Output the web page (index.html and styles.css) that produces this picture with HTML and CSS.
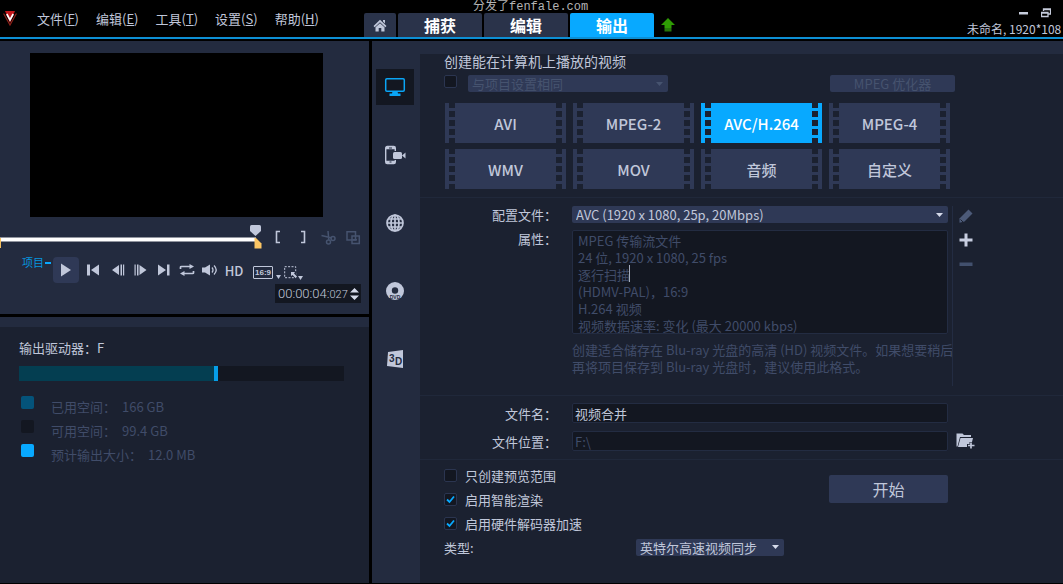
FILE: index.html
```html
<!DOCTYPE html>
<html lang="zh-CN">
<head>
<meta charset="utf-8">
<title>输出</title>
<link rel="stylesheet" href="styles.css">
</head>
<body>
<header class="topbar">
  <nav class="menu">
    <svg class="logo" width="14" height="15" viewBox="0 0 14 15"><path d="M2 0h10L7 12z" fill="#c3171b"/><path d="M.6 2.500 7 14l6.400-11.500" fill="none" stroke="#8d2018" stroke-width="1.200"/><path d="M3.800 3 7 9l3.200-6" fill="none" stroke="#fff" stroke-width="1.700"/></svg>
    <button>文件(<u>F</u>)</button>
    <button>编辑(<u>E</u>)</button>
    <button>工具(<u>T</u>)</button>
    <button>设置(<u>S</u>)</button>
    <button>帮助(<u>H</u>)</button>
  </nav>
  <div class="tabs">
    <button class="tab home" aria-label="主页"><svg width="14" height="13" viewBox="0 0 14 13"><path d="M7 .8 13.500 7l-1.200 1.300L7 3.300 1.700 8.300.5 7zM10 1h2v3.500l-2-2z" fill="#c0c7da"/><path d="M7 4.200 11.500 8.300V12.500H8.300V9H5.700v3.500H2.500V8.300z" fill="#c0c7da"/></svg></button>
    <button class="tab">捕获</button>
    <button class="tab">编辑</button>
    <button class="tab active">输出</button>
    <button class="update" aria-label="更新"><svg width="14" height="14" viewBox="0 0 14 14"><path d="M7 0 14 7H10.500V10H3.500V7H0z" fill="#2f9b04"/><path d="M3.500 10h7v3.500h-7z" fill="#26760a"/></svg></button>
  </div>
  <div class="status">
    <div class="winbtns">
      <button aria-label="最小化"><svg width="10" height="10" viewBox="0 0 10 10"><path d="M0 4h9v2.500H0z" fill="#c6ccdc"/></svg></button>
      <button aria-label="还原"><svg width="10" height="10" viewBox="0 0 10 10"><path d="M2.500 3V1H9.500V6H7.500M2.500 1.500h7M.5 4.500h6.500v4H.5zM.5 5h6.500" fill="none" stroke="#c6ccdc" stroke-width="1.300"/></svg></button>
      <button aria-label="关闭"><svg width="10" height="10" viewBox="0 0 10 10"><path d="m1 1 8 8M9 1 1 9" stroke="#c6ccdc" stroke-width="2"/></svg></button>
    </div>
    <div class="project">未命名, 1920*108</div>
  </div>
  <div class="watermark">分发了fenfale.com</div>
</header>

<main class="workspace">
  <div class="left">
    <section class="player">
      <div class="video"></div>
      <div class="scrub">
        <svg width="262" height="24" viewBox="0 0 262 24"><path d="M0 14.500h256" stroke="#fff" stroke-width="4"/><path d="M0 13h1v10H0z" fill="#f5c060"/><path d="M250 1.500q0-1.500 1.500-1.500h8q1.500 0 1.500 1.500V6l-5.500 5L250 6z" fill="#c0c7da"/><path d="M254.500 13h1.500l5.500 5.500V23.500h-7z" fill="#fcc664"/></svg>
        <button aria-label="开始标记"><svg width="24" height="14" viewBox="0 0 24 14"><path d="M14 1.500h-3.500v11H14" fill="none" stroke="#c0c7da" stroke-width="1.600"/></svg></button>
        <button aria-label="结束标记"><svg width="24" height="14" viewBox="0 0 24 14"><path d="M10 1.500h3.500v11H10" fill="none" stroke="#c0c7da" stroke-width="1.600"/></svg></button>
        <button aria-label="剪切"><svg width="24" height="15" viewBox="0 0 24 15"><g fill="none" stroke="#46536f" stroke-width="1.500"><path d="M12 1l.8 9M5.500 5.500 16 8"/><circle cx="12.500" cy="12" r="2"/><circle cx="17" cy="8.500" r="2"/></g></svg></button>
        <button aria-label="复制"><svg width="24" height="15" viewBox="0 0 24 15"><g fill="none" stroke="#46536f" stroke-width="1.500"><path d="M6 1.800h8.500V10H6z"/><path d="M11 6h7.300v7.500H11z"/><path d="M12 9.800h4"/></g></svg></button>
      </div>
      <div class="controls">
        <span class="mode">项目</span>
        <button class="play" aria-label="播放"><svg width="12" height="14" viewBox="0 0 12 14"><path d="M1 .5 11 7 1 13.500z" fill="#c0c7da"/></svg></button>
        <button aria-label="起始"><svg width="13" height="12" viewBox="0 0 13 12"><path d="M0 .5h3v11H0zM12 .5v11L4 6z" fill="#c0c7da"/></svg></button>
        <button aria-label="上一帧"><svg width="13" height="12" viewBox="0 0 13 12"><path d="M7 1v10L0 6zM8.500 .5h1.500v11H8.500zM11 .5h1.200v11H11z" fill="#c0c7da"/></svg></button>
        <button aria-label="下一帧"><svg width="13" height="12" viewBox="0 0 13 12"><path d="M5.500 1v10L12.500 6zM.5 .5h1.200v11H.5zM3 .5h1.500v11H3z" fill="#c0c7da"/></svg></button>
        <button aria-label="结束"><svg width="13" height="12" viewBox="0 0 13 12"><path d="M1 .5v11L9 6zM10 .5h2.500v11H10z" fill="#c0c7da"/></svg></button>
        <button aria-label="重复"><svg width="16" height="12" viewBox="0 0 16 12"><path d="M1.500 5V3Q1.500 2.500 2.500 2.500H11M14.500 7v2q0 .5-1 .5H5" fill="none" stroke="#c0c7da" stroke-width="1.700"/><path d="M10.500 0 15 2.500 10.500 5zM5.500 7 1 9.500 5.500 12z" fill="#c0c7da"/></svg></button>
        <button aria-label="音量"><svg width="16" height="12" viewBox="0 0 16 12"><path d="M0 3.500h3L8 .5v11L3 8.500H0z" fill="#c0c7da"/><path d="M10 3.500q2 2.500 0 5M12 1.500q4.500 4.500 0 9" fill="none" stroke="#c0c7da" stroke-width="1.300"/></svg></button>
        <button class="hd">HD</button>
        <button class="ratio"><span>16:9</span><svg width="5" height="4" viewBox="0 0 5 4"><path d="M0 0h5L2.500 4z" fill="#c0c7da"/></svg></button>
        <button class="resize" aria-label="调整大小"><svg width="19" height="14" viewBox="0 0 19 14"><path d="M.7 .7h11v11H.7z" fill="none" stroke="#c0c7da" stroke-dasharray="2 1.400"/><path d="M6 5.500h6v6h-2L7 8z" fill="#232b3f"/><path d="M7 6h4L10 7.500l3 3-1.500 1.500-3-3L7 10z" fill="#c0c7da"/><path d="M14 10h5l-2.500 4z" fill="#c0c7da"/></svg></button>
      </div>
      <div class="timecode"><span>00:00:04:<small>027</small></span><svg width="9" height="14" viewBox="0 0 9 14"><path d="M0 5.500 4.500 1 9 5.500zM0 8.500h9L4.500 13z" fill="#d5daea"/></svg></div>
    </section>
    <section class="drive">
      <h2>输出驱动器：F</h2>
      <div class="usage"><div class="used" style="width:60%"></div><div class="estimate"></div></div>
      <dl class="legend">
        <div><i class="c-used"></i><dt>已用空间：</dt><dd>166 GB</dd></div>
        <div><i class="c-free"></i><dt>可用空间：</dt><dd>99.4 GB</dd></div>
        <div><i class="c-est"></i><dt>预计输出大小：</dt><dd>12.0 MB</dd></div>
      </dl>
    </section>
  </div>

  <div class="right">
    <nav class="targets">
      <button class="active" aria-label="计算机"><svg width="22" height="20" viewBox="0 0 22 20"><rect x="1.700" y="1.700" width="18.600" height="12.600" rx="1.200" fill="none" stroke="#0aa5f5" stroke-width="1.500"/><path d="M8.500 14.500h5l.5 2h2.500V19h-11v-2.500H8z" fill="#0aa5f5"/></svg></button>
      <button aria-label="设备"><svg width="22" height="20" viewBox="0 0 22 20"><rect x="1.700" y="1.500" width="9.600" height="17" rx="1.500" fill="none" stroke="#c0c7da" stroke-width="1.400"/><path d="M2 2h9v2.200H2zM2 15.800h9V18H2z" fill="#c0c7da"/><path d="M5 3h3M5.500 17h2" stroke="#232b3f"/><rect x="8" y="6" width="11" height="9" rx="1.500" fill="#232b3f"/><rect x="9" y="7" width="9" height="7" rx="1.500" fill="#c0c7da"/><path d="m18 10.500 3.500-3v6z" fill="#c0c7da"/></svg></button>
      <button aria-label="网络"><svg width="20" height="20" viewBox="0 0 20 20"><g fill="none" stroke="#c0c7da" stroke-width="1.700"><circle cx="10" cy="10" r="8"/><ellipse cx="10" cy="10" rx="4" ry="8"/><path d="M10 2v16M2 10h16M3.300 6h13.400M3.300 14h13.400"/></g></svg></button>
      <button aria-label="光盘"><svg width="20" height="20" viewBox="0 0 20 20"><circle cx="10" cy="10" r="9" fill="#c0c7da"/><circle cx="10" cy="9.500" r="3.200" fill="#232b3f"/><text x="10" y="17.500" text-anchor="middle" class="disc">DVD</text></svg></button>
      <button aria-label="3D 影片"><svg width="18" height="20" viewBox="0 0 18 20"><path d="M2 3 17 1v18L1 17z" fill="#c0c7da"/><text x="3" y="13" class="three">3</text><text x="9" y="15.500" class="three">D</text></svg></button>
    </nav>

    <form class="settings">
      <section class="formats">
        <h1>创建能在计算机上播放的视频</h1>
        <div class="same">
          <input type="checkbox" aria-label="与项目设置相同">
          <select disabled aria-label="项目设置"><option>与项目设置相同</option></select>
          <button type="button" class="optimize" disabled>MPEG 优化器</button>
        </div>
        <div class="films">
          <button type="button" class="film">AVI</button>
          <button type="button" class="film">MPEG-2</button>
          <button type="button" class="film active">AVC/H.264</button>
          <button type="button" class="film">MPEG-4</button>
          <button type="button" class="film">WMV</button>
          <button type="button" class="film">MOV</button>
          <button type="button" class="film">音频</button>
          <button type="button" class="film">自定义</button>
        </div>
      </section>

      <section class="profile">
        <div class="fields">
          <label for="profile">配置文件：</label>
          <select id="profile"><option>AVC (1920 x 1080, 25p, 20Mbps)</option></select>
          <label for="props">属性：</label>
          <div class="props">
            <textarea id="props" readonly>MPEG 传输流文件
24 位, 1920 x 1080, 25 fps
逐行扫描
(HDMV-PAL)，16:9
H.264 视频
视频数据速率: 变化 (最大 20000 kbps)</textarea>
            <span class="caret"></span>
          </div>
          <p class="note">创建适合储存在 Blu-ray 光盘的高清 (HD) 视频文件。如果想要稍后再将项目保存到 Blu-ray 光盘时，建议使用此格式。</p>
        </div>
        <div class="tools">
          <button type="button" aria-label="编辑"><svg width="14" height="14" viewBox="0 0 14 14"><path d="M9.500 .5 13.500 4.500 5.500 12.500 .5 13.800V9.500z" fill="#4c5a78"/><path d="M1.500 10.500 4 13" stroke="#1b2130"/></svg></button>
          <button type="button" aria-label="添加"><svg width="14" height="14" viewBox="0 0 14 14"><path d="M5.500 .5h3v5h5v3h-5v5h-3v-5h-5v-3h5z" fill="#c8cee0"/></svg></button>
          <button type="button" aria-label="删除"><svg width="14" height="14" viewBox="0 0 14 14"><path d="M.5 5.500h13v3.500H.5z" fill="#42506d"/></svg></button>
        </div>
      </section>

      <section class="file">
        <label for="fname">文件名：</label>
        <input id="fname" type="text" value="视频合并">
        <label for="floc">文件位置：</label>
        <input id="floc" class="dim" type="text" value="F:\" readonly>
        <button type="button" aria-label="浏览"><svg width="19" height="16" viewBox="0 0 19 16"><path d="M.5 13.500V.5h6l1.500 1.500h7v2H4L1.500 13.500z" fill="#c0c7da"/><path d="M4.500 5H17l-1 4h-2.500v2h-2.500v3h-9z" fill="#c0c7da"/><path d="M15 9.500v6M12 12.500h6.500" stroke="#c0c7da" stroke-width="1.700"/></svg></button>
      </section>

      <section class="options">
        <div class="checks">
          <label><input type="checkbox">只创建预览范围</label>
          <label><input type="checkbox" checked>启用智能渲染</label>
          <label><input type="checkbox" checked>启用硬件解码器加速</label>
          <div class="type"><label for="type">类型:</label><select id="type"><option>英特尔高速视频同步</option></select></div>
        </div>
        <button type="button" class="start">开始</button>
      </section>
    </form>
  </div>
</main>
</body>
</html>
```
FILE: styles.css
```css
:root {
  --panel: #232b3f;
  --deep: #1b2130;
  --well: #131721;
  --control: #2f3956;
  --text: #c0c7da;
  --dim: #404c69;
  --blue: #08a9ff;
}

* { box-sizing: border-box; }

body {
  margin: 0;
  min-height: 100vh;
  display: flex;
  flex-direction: column;
  overflow: hidden;
  background: #000;
  color: var(--text);
  font: 13px/17px "Noto Sans CJK SC", "Noto Sans", sans-serif;
}

button, input, select, textarea {
  margin: 0;
  padding: 0;
  border: 0;
  background: none;
  color: inherit;
  font: inherit;
}

h1, h2, p, dl, dd { margin: 0; font-size: 13px; font-weight: 400; }
svg { display: block; }

/* Top bar */
.topbar {
  position: relative;
  display: flex;
  height: 39px;
  margin-bottom: 2px;
  border-bottom: 2px solid #0d8fd4;
}
.menu {
  flex: 0 0 364px;
  display: flex;
  align-items: center;
  gap: 17px;
  padding-left: 3px;
}
.menu .logo { margin-right: 3px; }
.menu button { white-space: nowrap; }
.tabs { display: flex; align-items: flex-end; gap: 2px; }
.tab {
  width: 84px;
  height: 24px;
  background: #2a334a;
  border-radius: 2px 2px 0 0;
  color: #fff;
  font-size: 16px;
  font-weight: 700;
  line-height: 23px;
}
.tab.home { width: 32px; display: grid; place-items: center; }
.tab.active { background: var(--blue); }
.update { padding: 0 0 5px 5px; }
.status {
  width: 96px;
  margin-left: auto;
  overflow: hidden;
  white-space: nowrap;
}
.winbtns { display: flex; gap: 12px; padding: 8px 0 2px 52px; }
.project { font-size: 12px; }
.watermark {
  position: absolute;
  left: 473px;
  top: 0;
  color: #b4b4b4;
  font: 12px/14px "Liberation Mono", "Noto Sans CJK SC", monospace;
}

/* Workspace */
.workspace { flex: 1; display: flex; gap: 3px; padding-bottom: 1px; }
.left { flex: 0 0 369px; display: flex; flex-direction: column; gap: 3px; }

.player { background: var(--panel); padding: 12px 0 11px; }
.video { height: 164px; margin: 0 46px 0 30px; background: #000; }
.scrub { display: flex; align-items: center; gap: 1px; padding: 8px 0; }
.scrub svg + button { margin-left: 3px; }
.controls {
  display: grid;
  grid-template-columns: 53px 26px 28px 22px 22px 24px 23px 24px 24px 35px 22px;
  justify-items: center;
  align-items: center;
}
.mode {
  align-self: start;
  justify-self: end;
  display: flex;
  align-items: center;
  gap: 1px;
  padding-right: 2px;
  color: #0795df;
  font-size: 11px;
  line-height: 11px;
}
.mode::after { content: ""; width: 6px; height: 2px; background: var(--blue); }
.play {
  display: grid;
  place-items: center;
  width: 26px;
  height: 26px;
  border-radius: 4px;
  background: var(--control);
}
.hd { font-size: 13px; font-weight: 500; }
.ratio { display: flex; align-items: flex-end; justify-self: end; gap: 3px; padding-top: 5px; }
.ratio span {
  border: 1px solid var(--text);
  border-radius: 1px;
  padding: 0 1px;
  font: 700 8px/11px "Liberation Sans", sans-serif;
}
.resize { justify-self: end; padding-top: 5px; }
.timecode {
  display: flex;
  align-items: center;
  justify-content: space-between;
  width: 86px;
  height: 19px;
  margin: 1px 8px 0 auto;
  padding: 0 2px 0 3px;
  background: var(--well);
  font: 300 13px/19px Roboto, sans-serif;
}
.timecode small { font-size: 11px; }

.drive {
  flex: 1;
  background: var(--deep);
  border-top: 10px solid var(--panel);
  padding: 12px 25px 0 19px;
}
.usage { display: flex; height: 15px; margin: 10px 0 14px; background: var(--well); }
.used { background: #043e51; }
.estimate { width: 4px; background: #069ee8; }
.legend { color: var(--dim); }
.legend div { display: flex; height: 24px; padding-left: 2px; }
.legend i { width: 13px; height: 13px; margin: 1px 17px 0 0; border-radius: 2px; }
.legend dt { padding-top: 3px; }
.legend dd { padding: 3px 0 0 6px; }
.c-used { background: #04537a; }
.c-free { background: var(--well); }
.c-est { background: var(--blue); }

/* Output targets */
.right { flex: 1; min-width: 0; display: flex; background: var(--panel); }
.targets {
  flex: 0 0 48px;
  display: flex;
  flex-direction: column;
  gap: 32px;
  padding: 28px 0 0 4px;
}
.targets button { display: grid; place-items: center; width: 38px; height: 36px; }
.targets .active { background: var(--well); }
.disc { font: 700 5px "Liberation Sans", sans-serif; fill: var(--panel); }
.three { font: 700 10px "Liberation Sans", sans-serif; fill: var(--panel); }

/* Settings */
.settings { flex: 1; min-width: 0; margin-top: 13px; background: var(--deep); }
.settings section + section { border-top: 1px solid #20283a; }

.settings select {
  appearance: none;
  height: 17px;
  padding: 0 20px 0 4px;
  border-radius: 2px;
  background: var(--control) no-repeat right 5px center;
  background-image: url("data:image/svg+xml,%3Csvg xmlns='http://www.w3.org/2000/svg' width='7' height='4'%3E%3Cpath d='M0 0h7L3.500 4z' fill='%23d5daea'/%3E%3C/svg%3E");
  line-height: 17px;
}
.settings select:disabled {
  opacity: 1;
  color: #46536f;
  background-image: url("data:image/svg+xml,%3Csvg xmlns='http://www.w3.org/2000/svg' width='7' height='4'%3E%3Cpath d='M0 0h7L3.500 4z' fill='%2346536f'/%3E%3C/svg%3E");
}
.settings input[type="checkbox"] {
  appearance: none;
  width: 13px;
  height: 13px;
  border: 1px solid #2b3550;
  border-radius: 2px;
  background: var(--well) no-repeat center;
}
.settings input[type="checkbox"]:checked {
  background-image: url("data:image/svg+xml,%3Csvg xmlns='http://www.w3.org/2000/svg' width='9' height='9'%3E%3Cpath d='M1 4.500l2.500 2.500L8 1.500' fill='none' stroke='%2308a9ff' stroke-width='1.800'/%3E%3C/svg%3E");
}
.settings input[type="text"], .settings textarea {
  border: 1px solid #232c42;
  border-radius: 2px;
  background: var(--well);
}

.formats { padding: 0 24px 8px; }
.formats h1 { font-size: 14px; line-height: 15px; }
.same {
  display: grid;
  grid-template-columns: 24px 200px 125px;
  align-items: center;
  padding: 6px 0 11px;
}
.same input { align-self: start; }
.optimize {
  width: 125px;
  height: 17px;
  margin-left: 162px;
  border-radius: 2px;
  background: var(--control);
  color: #46536f;
  line-height: 17px;
}
.films {
  display: grid;
  grid-template-columns: repeat(4, 121px);
  gap: 6px 7px;
  padding-left: 1px;
}
.film {
  --c: var(--control);
  --holes: repeating-linear-gradient(var(--deep) 0 5px, var(--c) 5px 8px, var(--deep) 8px 9px);
  height: 40px;
  background:
    var(--holes) left 4px top / 6px 100% no-repeat,
    var(--holes) right 4px top / 6px 100% no-repeat,
    var(--c);
  font-size: 15px;
  font-weight: 500;
}
.film.active { --c: var(--blue); color: #fff; }

.profile { display: flex; gap: 4px; padding: 8px 24px 9px 0; }
.fields {
  display: grid;
  grid-template-columns: 137px 376px;
  column-gap: 15px;
  row-gap: 7px;
}
.fields label, .file label { grid-column: 1; text-align: right; }
.props { position: relative; display: flex; }
.props textarea {
  flex: 1;
  height: 104px;
  padding: 1px 5px;
  overflow: hidden;
  resize: none;
  color: var(--dim);
}
.caret { position: absolute; left: 57px; top: 35px; width: 1px; height: 17px; background: #a5acbd; }
.note { grid-column: 2; min-height: 45px; margin-right: -12px; color: var(--dim); }
.tools {
  display: flex;
  flex-direction: column;
  gap: 10px;
  padding: 3px 0 0 6px;
  border-left: 1px solid #232c42;
}

.file {
  display: grid;
  grid-template-columns: 137px 376px auto;
  justify-content: start;
  align-items: center;
  column-gap: 15px;
  row-gap: 8px;
  padding: 7px 0 8px;
}
.file input { grid-column: 2; height: 20px; padding: 0 2px; }
.file .dim { color: var(--dim); }
.file button { margin-left: -7px; }

.options { display: flex; padding: 3px 24px; }
.checks { width: 384px; }
.checks > label { display: flex; align-items: center; gap: 8px; height: 24px; }
.type { display: flex; align-items: center; height: 24px; }
.type label { width: 192px; }
.type select { width: 148px; }
.start {
  width: 119px;
  height: 28px;
  margin: 12px 0 0 1px;
  border-radius: 2px;
  background: var(--control);
  font-size: 16px;
  line-height: 28px;
}
```
